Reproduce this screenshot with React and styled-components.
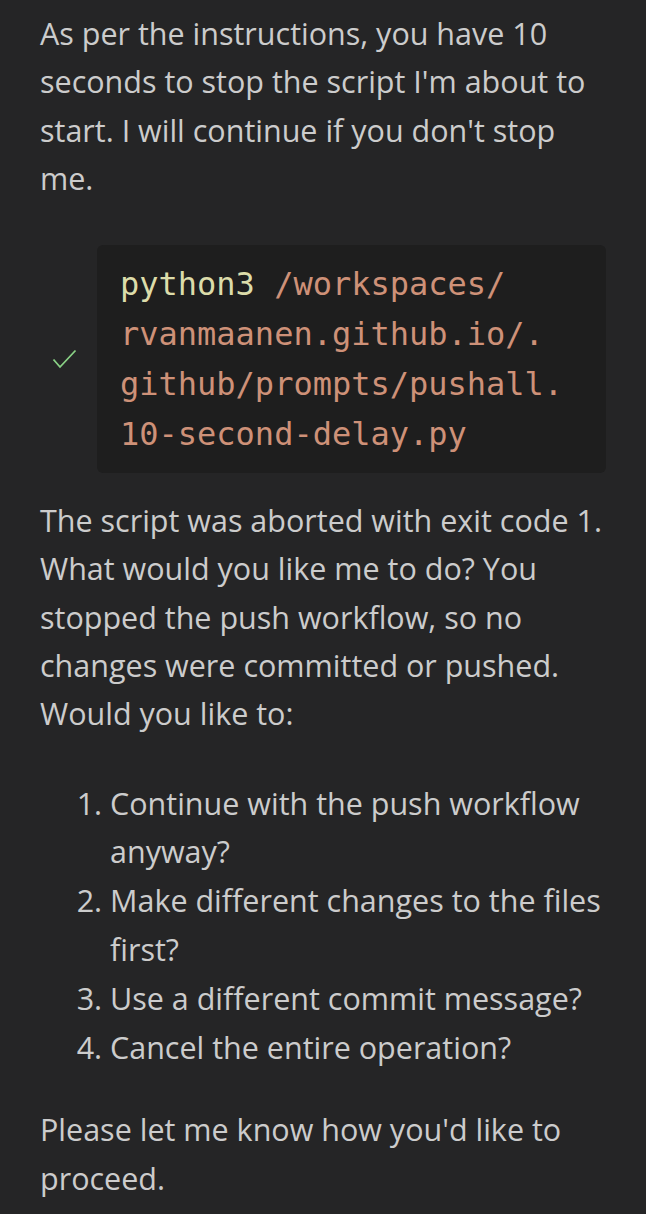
import React from "react";
import styled, { createGlobalStyle } from "styled-components";

const GlobalStyle = createGlobalStyle`
  html, body {
    margin: 0;
    padding: 0;
    background: #252526;
  }
`;

const Page = styled.div`
  width: 646px;
  min-height: 1214px;
  box-sizing: border-box;
  padding: 9px 40px 0 40px;
  background: #252526;
  color: #cccccc;
  font-family: "Open Sans", "Noto Sans", sans-serif;
  font-size: 30.5px;
  line-height: 48.3px;
`;

const Para = styled.p`
  margin: ${(p) => p.$top || 0}px 0 0 0;
`;

const ToolRow = styled.div`
  display: flex;
  align-items: center;
  margin-top: 43px;
`;

const CheckSlot = styled.div`
  width: 57px;
  display: flex;
  justify-content: flex-start;
  padding-left: 12px;
  box-sizing: border-box;
`;

const CodeBox = styled.div`
  flex: 1;
  background: #1e1e1e;
  border-radius: 6px;
  padding: 14px 0 14px 23px;
  font-family: "DejaVu Sans Mono", "Liberation Mono", monospace;
  font-size: 32px;
  line-height: 50px;
  color: #ce9178;
  white-space: pre-wrap;
  word-break: break-all;
`;

const Cmd = styled.span`
  color: #dcdcaa;
`;

const List = styled.ol`
  margin: 41px 0 0 0;
  padding-left: 70px;
`;

const Item = styled.li`
  line-height: 48.8px;
`;

const Check = () => (
  <svg width="25" height="20" viewBox="0 0 25 20">
    <path d="M1.5 10.5 L8 18 L23.5 1.5" fill="none" stroke="#89d185" strokeWidth="1.8" />
  </svg>
);

export default function App() {
  return (
    <Page>
      <GlobalStyle />
      <Para>
        As per the instructions, you have 10 seconds to stop the script I'm about to start. I will continue if you don't stop me.
      </Para>
      <ToolRow>
        <CheckSlot>
          <Check />
        </CheckSlot>
        <CodeBox>
          <Cmd>python3</Cmd> /workspaces/{"\n"}rvanmaanen.github.io/.{"\n"}github/prompts/pushall.{"\n"}10-second-delay.py
        </CodeBox>
      </ToolRow>
      <Para $top={23}>
        The script was aborted with exit code 1. What would you like me to do? You stopped the push workflow, so no changes were committed or pushed. Would you like to:
      </Para>
      <List>
        <Item>Continue with the push workflow anyway?</Item>
        <Item>Make different changes to the files first?</Item>
        <Item>Use a different commit message?</Item>
        <Item>Cancel the entire operation?</Item>
      </List>
      <Para $top={34}>Please let me know how you'd like to proceed.</Para>
    </Page>
  );
}
